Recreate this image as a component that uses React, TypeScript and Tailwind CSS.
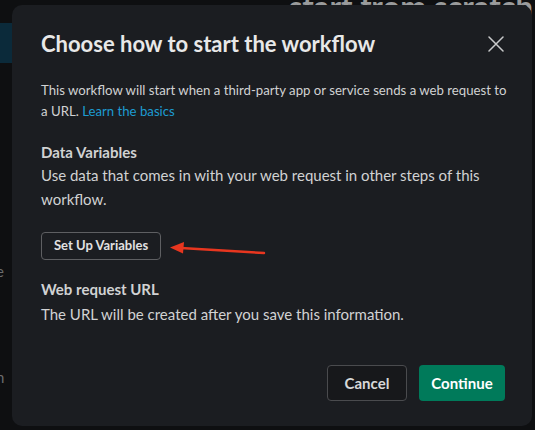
const Backdrop = () => (
  <>
    <div className="absolute left-0 top-[23px] h-[40px] w-[14px] bg-[#0b2a3a]" />
    <p className="absolute right-[2px] top-[-17px] whitespace-nowrap text-[31px] font-bold text-[#9a9b9c]">
      start from scratch
    </p>
    <p className="absolute left-[-4px] top-[260px] text-[15px] text-[#6b6c6e]">e</p>
    <p className="absolute left-[-4px] top-[366px] text-[15px] text-[#6b6c6e]">n</p>
  </>
);

const CloseIcon = () => (
  <svg width="16" height="16" viewBox="0 0 16 16">
    <path d="M1 1 L15 15 M15 1 L1 15" stroke="#c9cacb" strokeWidth="1.5" strokeLinecap="round" />
  </svg>
);

const RedArrow = () => (
  <svg width="100" height="20" viewBox="0 0 100 20" className="ml-[9px] mt-[2px]">
    <path d="M11 11 L94 16" stroke="#e8361f" strokeWidth="2.5" strokeLinecap="round" />
    <path d="M0 10.5 L14 5 L13 16.5 Z" fill="#e8361f" />
  </svg>
);

export default function App() {
  return (
    <div
      className="relative h-[430px] w-[535px] overflow-hidden bg-[#0e0f11] pt-[5px] pl-[12px] pr-[3px] pb-[4px]"
      style={{ fontFamily: "Lato, 'Noto Sans', sans-serif" }}
    >
      <Backdrop />
      <section className="relative flex h-full flex-col rounded-[10px] bg-[#1b1d21] pl-[29px] pr-[27px] pt-[23px] pb-[25px] text-[#d1d2d3]">
        <header className="flex items-center justify-between">
          <h1 className="text-[22px] font-bold leading-[32px] text-[#e8e8e8]">
            Choose how to start the workflow
          </h1>
          <button className="mr-[1px]">
            <CloseIcon />
          </button>
        </header>
        <p className="-mr-[6px] mt-[20px] text-[13.2px] leading-[21px]">
          This workflow will start when a third-party app or service sends a web request to a URL.{" "}
          <span className="text-[#1d9bd1]">Learn the basics</span>
        </p>
        <h2 className="mt-[19px] text-[15px] font-bold leading-[22px]">Data Variables</h2>
        <p className="text-[15px] leading-[24px]">
          Use data that comes in with your web request in other steps of this workflow.
        </p>
        <div className="mt-[21px] flex items-center">
          <button className="h-[28px] rounded-[4px] border border-[#5e5f62] px-[12px] text-[13px] font-bold text-[#e1e1e2]">
            Set Up Variables
          </button>
          <RedArrow />
        </div>
        <h2 className="mt-[18px] text-[15px] font-bold leading-[22px]">Web request URL</h2>
        <p className="mt-[2px] text-[15px] leading-[24px]">
          The URL will be created after you save this information.
        </p>
        <footer className="mt-auto flex justify-end gap-[12px]">
          <button className="h-[36px] w-[80px] rounded-[4px] border border-[#4a4b4e] bg-[#17181b] text-[15px] font-bold text-[#d8d8d9]">
            Cancel
          </button>
          <button className="h-[36px] w-[86px] rounded-[4px] bg-[#007a5a] text-[15px] font-bold text-white">
            Continue
          </button>
        </footer>
      </section>
    </div>
  );
}
